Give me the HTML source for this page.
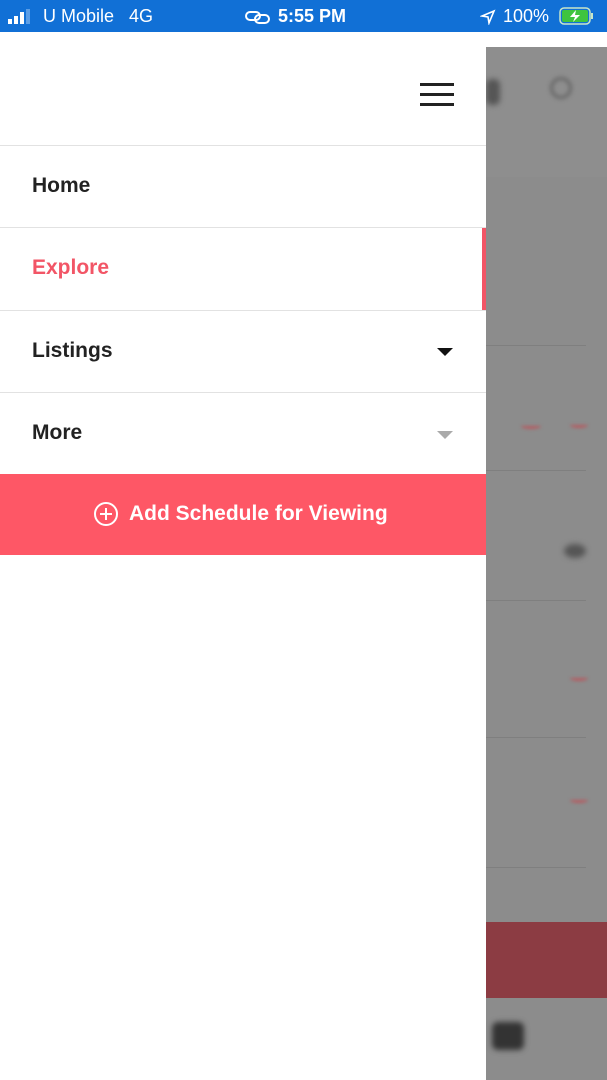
<!DOCTYPE html>
<html><head><meta charset="utf-8"><style>
*{margin:0;padding:0;box-sizing:border-box}
body{width:607px;height:1080px;position:relative;overflow:hidden;background:#fff;font-family:"Liberation Sans",Roboto,sans-serif}
.sb{position:absolute;left:0;top:0;width:607px;height:32px;background:#1170d6;color:#fff;font-size:18px}
.sb span{position:absolute;top:6px}
.ov{position:absolute;left:486px;top:47px;width:121px;height:1033px;background:#8c8c8c}
.drawer{position:absolute;left:0;top:32px;width:486px;height:1048px;background:#fff}
.row{position:absolute;left:0;width:486px;height:82px;border-top:1.5px solid #e2e2e2;font-weight:bold;font-size:21px;color:#222}
.row .t{position:absolute;left:32px;top:28px}
.btn{position:absolute;left:0;top:474px;width:486px;height:81px;background:#fe5766;color:#fff;font-weight:bold;font-size:21px}
.ln{position:absolute;left:0;width:100px;height:1px;background:#7f7f7f}
.ch{position:absolute;width:18px;height:6px;border-bottom:3px solid #b55a60;border-radius:0 0 50% 50%;filter:blur(1.5px)}
</style></head><body>
<div class="sb">
 <svg style="position:absolute;left:8px;top:9px" width="28" height="16"><rect x="0" y="10" width="4" height="5" fill="#fff"/><rect x="6" y="7" width="4" height="8" fill="#fff"/><rect x="12" y="3" width="4" height="12" fill="#fff"/><rect x="18" y="0" width="4" height="15" fill="#5c9ee6"/></svg>
 <span style="left:43px">U Mobile&nbsp;&nbsp; 4G</span>
 <svg style="position:absolute;left:245px;top:9px" width="26" height="16" fill="none" stroke="#fff" stroke-width="2"><rect x="1" y="3" width="14" height="8" rx="4"/><rect x="10" y="6" width="14" height="8" rx="4"/></svg>
 <span style="left:278px;font-weight:bold">5:55 PM</span>
 <svg style="position:absolute;left:480px;top:9px" width="16" height="16" fill="none" stroke="#fff" stroke-width="1.6"><path d="M14 2 L2 7 L8 8 L9 14 Z"/></svg>
 <span style="left:503px">100%</span>
 <svg style="position:absolute;left:559px;top:7px" width="36" height="18"><rect x="1" y="1" width="30" height="16" rx="4" fill="none" stroke="#c8e6c9" stroke-width="1.5"/><rect x="3" y="3" width="26" height="12" rx="2" fill="#3ec43e"/><rect x="32" y="6" width="2" height="6" fill="#c8e6c9"/><path d="M17 3 L11 10 L16 10 L14 15 L21 8 L16 8 Z" fill="#fff"/></svg>
</div>
<div class="ov">
 <div style="position:absolute;left:0;top:0;width:121px;height:130px;background:#8e8e8e"></div>
 <div class="ln" style="top:298px"></div>
 <div class="ln" style="top:423px"></div>
 <div class="ln" style="top:553px"></div>
 <div class="ln" style="top:690px"></div>
 <div class="ln" style="top:820px"></div>
 <div class="ch" style="left:35px;top:376px;width:20px"></div>
 <div class="ch" style="left:84px;top:375px"></div>
 <div class="ch" style="left:84px;top:628px"></div>
 <div class="ch" style="left:84px;top:750px"></div>
 <div style="position:absolute;left:78px;top:497px;width:22px;height:14px;background:#555;border-radius:50%;filter:blur(3px)"></div>
 <div style="position:absolute;left:0;top:875px;width:121px;height:76px;background:#8c3c43"></div>
 <div style="position:absolute;left:6px;top:975px;width:32px;height:28px;background:#333;border-radius:6px;filter:blur(3px)"></div>
 <div style="position:absolute;left:0;top:32px;width:14px;height:26px;background:#555;border-radius:6px;filter:blur(3px)"></div>
 <div style="position:absolute;left:64px;top:30px;width:22px;height:22px;border:3px solid #666;border-radius:50%;filter:blur(2px)"></div>
</div>
<div class="drawer">
 <div style="position:absolute;left:420px;top:51px;width:34px;height:3px;background:#222"></div>
 <div style="position:absolute;left:420px;top:61px;width:34px;height:3px;background:#222"></div>
 <div style="position:absolute;left:420px;top:71px;width:34px;height:3px;background:#222"></div>
</div>
<div class="row" style="top:145px"><span class="t">Home</span></div>
<div class="row" style="top:227px"><span class="t" style="color:#f25566">Explore</span><div style="position:absolute;right:0;top:0;width:4px;height:82px;background:#f25566"></div></div>
<div class="row" style="top:310px"><span class="t">Listings</span><svg style="position:absolute;left:437px;top:37px" width="16" height="9"><path d="M0 0 H16 L8 8 Z" fill="#111"/></svg></div>
<div class="row" style="top:392px"><span class="t">More</span><svg style="position:absolute;left:437px;top:38px" width="16" height="9"><path d="M0 0 H16 L8 8 Z" fill="#aaa"/></svg></div>
<div class="btn">
 <svg style="position:absolute;left:93px;top:27px" width="26" height="26" fill="none" stroke="#fff" stroke-width="2"><circle cx="13" cy="13" r="11"/><path d="M13 7 V19 M7 13 H19"/></svg>
 <span style="position:absolute;left:129px;top:28px">Add Schedule for Viewing</span>
</div>
</body></html>
